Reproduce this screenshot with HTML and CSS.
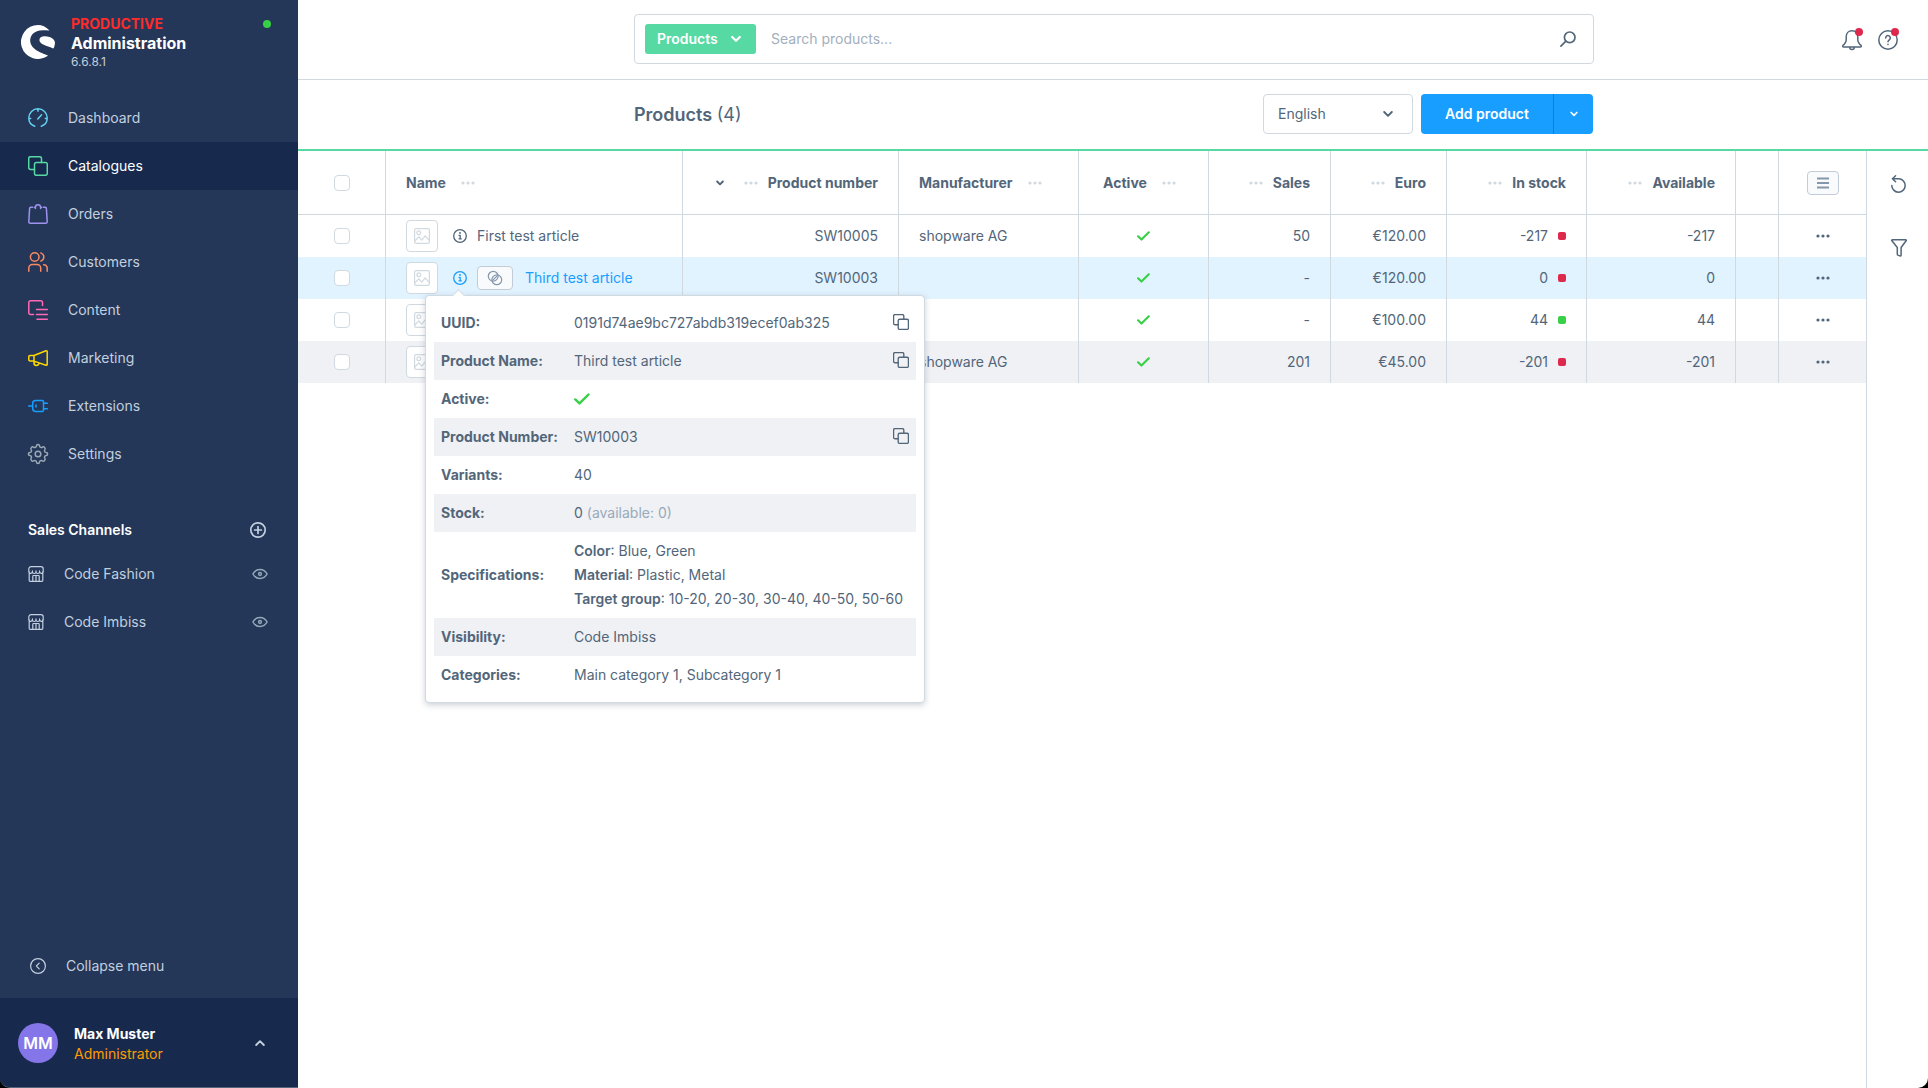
FILE: index.html
```html
<!DOCTYPE html>
<html lang="en">
<head>
<meta charset="utf-8">
<meta name="viewport" content="width=device-width, initial-scale=1">
<title>Products | Administration</title>
<link rel="stylesheet" href="styles.css">
</head>
<body>
<svg class="sprite" aria-hidden="true">
  <symbol id="i-copy" viewBox="0 0 20 20"><path d="M6.500 13.500H2.600A1.900 1.900 0 0 1 .7 11.600V2.600A1.900 1.900 0 0 1 2.600.7h9A1.900 1.900 0 0 1 13.500 2.600V6.500"/><rect x="6.500" y="6.500" width="12.800" height="12.800" rx="1.900"/></symbol>
  <symbol id="i-check" viewBox="0 0 16 12"><path d="M1.300 6.400l4.200 4L14.500 1.500"/></symbol>
  <symbol id="i-down" viewBox="0 0 10 8"><path d="M1.200 2l3.800 3.800L8.800 2"/></symbol>
  <symbol id="i-dots" viewBox="0 0 14 4"><circle cx="2" cy="2" r="1.600"/><circle cx="7" cy="2" r="1.600"/><circle cx="12" cy="2" r="1.600"/></symbol>
  <symbol id="i-info" viewBox="0 0 16 16"><circle cx="8" cy="8" r="7.200"/><path d="M7 7.300h1.200v3.900M6.900 11.200h2.600"/><circle cx="8" cy="4.700" r=".4"/></symbol>
  <symbol id="i-image" viewBox="0 0 16 16"><rect x=".6" y=".6" width="14.800" height="14.800" rx="1.600"/><circle cx="4.800" cy="4.700" r="1.900"/><path d="M.8 13l4-4.200 3 3.400 3.400-4.400 4 4.600"/></symbol>
  <symbol id="i-shop" viewBox="0 0 16 16"><path d="M1.200 5.500v8.700a1.200 1.200 0 0 0 1.200 1.200h11.200a1.200 1.200 0 0 0 1.200-1.200V5.500M3 .7h10a2.200 2.200 0 0 1 2.200 2.200v2.400a1.700 1.700 0 0 1-3.600.4V4.900v.8a1.800 1.800 0 0 1-3.600 0V4.900v.8a1.800 1.800 0 0 1-3.600 0V4.900v.8A1.700 1.700 0 0 1 .8 5.300V2.900A2.200 2.200 0 0 1 3 .7zM4.800 15.200V10.200a.7.7 0 0 1 .7-.7h5a.7.7 0 0 1 .7.7v5M8 9.500v5.800"/></symbol>
  <symbol id="i-eye" viewBox="0 0 16 12"><path d="M.9 6C2.600 3 5 1.500 8 1.500S13.400 3 15.100 6c-1.700 3-4.100 4.500-7.100 4.500S2.600 9 .9 6z"/><circle cx="8" cy="6" r="1.400"/></symbol>
</svg>

<div class="app">
  <aside class="sidebar">
    <header class="brand">
      <svg class="brand__logo" viewBox="0 0 34 34" aria-hidden="true"><path fill="#fff" d="M28 4.900C25 2 21 0 17 0A17 17 0 1 0 26.600 31C26.900 30.700 26.800 30.300 26.400 30.200C20 27.700 9.200 24.500 9.200 15.300C9.200 9.500 14.500 5.300 21.500 5.300C23.700 5.300 25.800 5.500 27.800 5.600C28.300 5.600 28.400 5.200 28 4.900z"/><path fill="#fff" d="M34 17.800C34 15.500 31.600 11.200 23.500 11.200C20.300 11.200 18.400 12.600 18.400 15C18.400 19.600 26 20.500 31.600 23.300C32.100 23.600 32.700 23.400 32.900 22.800C33.500 21.200 34 19.500 34 17.800z"/></svg>
      <div class="brand__text">
        <strong class="brand__env">PRODUCTIVE</strong>
        <strong class="brand__name">Administration</strong>
        <span class="brand__version">6.6.8.1</span>
      </div>
      <span class="brand__status"></span>
    </header>

    <nav class="menu" aria-label="Main menu">
      <a class="menu__item" href="#"><svg class="icon icon--dashboard" viewBox="0 0 20 20"><path d="M6.700 18.300C3.200 17 .8 13.800.8 10a9.200 9.200 0 0 1 18.400 0c0 3.800-2.400 7-5.900 8.300M10 1v2.200M1 10.600h1.700M17.300 10.600H19M9.800 11l3.800-4.200"/></svg>Dashboard</a>
      <a class="menu__item menu__item--active" href="#" aria-current="page"><svg class="icon icon--catalogue"><use href="#i-copy"/></svg>Catalogues</a>
      <a class="menu__item" href="#"><svg class="icon icon--orders" viewBox="0 0 20 20"><path d="M4.600 3.300H2.800A1.200 1.200 0 0 0 1.600 4.500L.8 17.800a1.400 1.400 0 0 0 1.400 1.500h15.600a1.400 1.400 0 0 0 1.400-1.500L18.400 4.500a1.200 1.200 0 0 0-1.200-1.200h-1.800M7.400 4.400V3.300A2.600 2.600 0 0 1 12.600 3.300V4.400M6.400 3.300h1M12.600 3.300h1"/></svg>Orders</a>
      <a class="menu__item" href="#"><svg class="icon icon--customers" viewBox="0 0 20 20"><circle cx="6.700" cy="5" r="4.300"/><path d="M.8 19.200v-3a3.600 3.600 0 0 1 3.600-3.600h4.700a3.600 3.600 0 0 1 3.600 3.600v3M12.800.9a4.300 4.300 0 0 1 0 8.200M15.600 12.700a3.700 3.700 0 0 1 3.600 3.600v2.900"/></svg>Customers</a>
      <a class="menu__item" href="#"><svg class="icon icon--content" viewBox="0 0 20 20"><path d="M5.500 14.500H2.500A1.700 1.700 0 0 1 .8 12.800V2.500A1.700 1.700 0 0 1 2.500.8h10.300a1.700 1.700 0 0 1 1.700 1.700v3M8.500 9.500h10.800M8.500 14.500h10.800M9 19.300h10.300"/></svg>Content</a>
      <a class="menu__item" href="#"><svg class="icon icon--marketing" viewBox="0 0 20 20"><path d="M6 7.500L18 2.800a.9.900 0 0 1 1.200.8v12.800a.9.900 0 0 1-1.200.8L6 13.100zM6 7.500H2a1.200 1.200 0 0 0-1.200 1.200v3A1.200 1.200 0 0 0 2 12.900h4M6 13v1.800a2.500 2.500 0 0 0 5 .4"/></svg>Marketing</a>
      <a class="menu__item" href="#"><svg class="icon icon--extensions" viewBox="0 0 20 20"><path d="M.7 10h4M7.500 4.600h6.800a1.200 1.200 0 0 1 1.200 1.200v8.400a1.200 1.200 0 0 1-1.200 1.200H7.500a2.800 2.800 0 0 1-2.800-2.800V7.400a2.800 2.800 0 0 1 2.800-2.800zM15.500 7.300h3.800M15.500 12.700h3.800M8 9v2"/></svg>Extensions</a>
      <a class="menu__item" href="#"><svg class="icon icon--settings" viewBox="0 0 20 20"><circle cx="10" cy="10" r="2.800"/><path d="M8.500 1.900A1.500 1.500 0 0 1 11.500 1.900C11.600 3.300 13.300 4 14.400 3.100C15.900 2.200 17.800 4.100 16.900 5.600C16 6.700 16.700 8.400 18.100 8.500A1.500 1.500 0 0 1 18.100 11.500C16.700 11.600 16 13.300 16.900 14.400C17.800 15.900 15.900 17.800 14.400 16.900C13.300 16 11.600 16.700 11.500 18.100A1.500 1.500 0 0 1 8.500 18.100C8.400 16.700 6.700 16 5.600 16.900C4.100 17.800 2.200 15.900 3.100 14.400C4 13.300 3.300 11.600 1.900 11.500A1.500 1.500 0 0 1 1.900 8.500C3.300 8.400 4 6.700 3.100 5.600C2.200 4.100 4.100 2.200 5.600 3.100C6.700 4 8.400 3.300 8.500 1.900z"/></svg>Settings</a>
    </nav>

    <section class="channels">
      <div class="channels__head">
        <h2 class="channels__title">Sales Channels</h2>
        <button class="plain" type="button" aria-label="Add sales channel"><svg class="icon icon--16 icon--bold" viewBox="0 0 16 16"><circle cx="8" cy="8" r="7.200"/><path d="M8 4.600v6.800M4.600 8h6.800"/></svg></button>
      </div>
      <div class="channel"><a class="channel__link" href="#"><svg class="icon icon--16"><use href="#i-shop"/></svg>Code Fashion</a><button class="plain" type="button" aria-label="Open Code Fashion"><svg class="icon icon--eye"><use href="#i-eye"/></svg></button></div>
      <div class="channel"><a class="channel__link" href="#"><svg class="icon icon--16"><use href="#i-shop"/></svg>Code Imbiss</a><button class="plain" type="button" aria-label="Open Code Imbiss"><svg class="icon icon--eye"><use href="#i-eye"/></svg></button></div>
    </section>

    <button class="collapse" type="button"><svg class="icon icon--16" viewBox="0 0 16 16"><circle cx="8" cy="8" r="7.400"/><path d="M9.200 5.200L6.400 8l2.800 2.800"/></svg>Collapse menu</button>

    <button class="user" type="button">
      <span class="user__avatar">MM</span>
      <span class="user__text"><strong class="user__name">Max Muster</strong><span class="user__role">Administrator</span></span>
      <svg class="icon chevron chevron--up"><use href="#i-down"/></svg>
    </button>
  </aside>

  <div class="page">
    <header class="topbar">
      <form class="search" role="search">
        <button class="search__type" type="button">Products<svg class="icon chevron chevron--bold"><use href="#i-down"/></svg></button>
        <input class="search__input" type="search" placeholder="Search products..." aria-label="Search products">
        <button class="plain" type="submit" aria-label="Search"><svg class="icon icon--16 icon--bold" viewBox="0 0 16 16"><circle cx="9.700" cy="6.300" r="5.300"/><path d="M5.900 10.100L.9 15.100"/></svg></button>
      </form>
      <div class="topbar__actions">
        <button class="plain notify" type="button" aria-label="Notifications"><svg class="icon" viewBox="0 0 20 20"><path d="M10 .8C6.500.8 4.200 3.400 4.200 6.800V10c0 1.500-.6 2.800-1.700 3.900L.9 15.600c-.5.600-.1 1.400.6 1.400h17c.7 0 1.100-.8.600-1.400l-1.600-1.700A5.600 5.600 0 0 1 15.800 10V6.800C15.800 3.400 13.500.8 10 .8zM7.700 17.300a2.300 2.300 0 0 0 4.600 0"/></svg></button>
        <button class="plain notify" type="button" aria-label="Help"><svg class="icon" viewBox="0 0 20 20"><circle cx="10" cy="10" r="9.200"/><path d="M7.700 8A2.300 2.300 0 1 1 11.300 9.800C10.400 10.400 10 10.800 10 11.800M10 14.200v.2"/></svg></button>
      </div>
    </header>

    <div class="smartbar">
      <div class="smartbar__inner">
        <h1 class="smartbar__title">Products <span class="smartbar__count">(4)</span></h1>
        <div class="smartbar__actions">
          <div class="select">
            <select class="select__field" aria-label="Language"><option>English</option></select>
            <svg class="icon chevron"><use href="#i-down"/></svg>
          </div>
          <div class="split">
            <button class="split__main" type="button">Add product</button>
            <button class="split__more" type="button" aria-label="More options"><svg class="icon chevron chevron--small"><use href="#i-down"/></svg></button>
          </div>
        </div>
      </div>
    </div>

    <div class="content">
      <main class="listing">
        <table class="grid">
          <colgroup><col class="w-check"><col class="w-name"><col class="w-number"><col class="w-maker"><col class="w-active"><col class="w-sales"><col class="w-euro"><col class="w-stock"><col class="w-avail"><col class="w-empty"><col class="w-actions"></colgroup>
          <thead>
            <tr>
              <th class="mid"><input class="check" type="checkbox" aria-label="Select all"></th>
              <th><div class="head">Name<svg class="dots"><use href="#i-dots"/></svg></div></th>
              <th><div class="head head--end"><svg class="icon chevron chevron--sort"><use href="#i-down"/></svg><svg class="dots"><use href="#i-dots"/></svg>Product number</div></th>
              <th><div class="head">Manufacturer<svg class="dots"><use href="#i-dots"/></svg></div></th>
              <th><div class="head head--mid">Active<svg class="dots"><use href="#i-dots"/></svg></div></th>
              <th><div class="head head--end"><svg class="dots"><use href="#i-dots"/></svg>Sales</div></th>
              <th><div class="head head--end"><svg class="dots"><use href="#i-dots"/></svg>Euro</div></th>
              <th><div class="head head--end"><svg class="dots"><use href="#i-dots"/></svg>In stock</div></th>
              <th><div class="head head--end"><svg class="dots"><use href="#i-dots"/></svg>Available</div></th>
              <th></th>
              <th class="mid"><button class="chip chip--menu" type="button" aria-label="List settings"><svg viewBox="0 0 12 12"><path d="M0 1.500h12M0 6h12M0 10.500h12"/></svg></button></th>
            </tr>
          </thead>
          <tbody>
            <tr>
              <td class="mid"><input class="check" type="checkbox" aria-label="Select First test article"></td>
              <td><div class="product"><span class="thumb"><svg class="icon"><use href="#i-image"/></svg></span><span class="product__info"><svg class="icon icon--info"><use href="#i-info"/></svg></span><a class="product__name" href="#">First test article</a></div></td>
              <td class="end">SW10005</td><td>shopware AG</td>
              <td class="mid"><svg class="tick"><use href="#i-check"/></svg></td>
              <td class="end">50</td><td class="end">€120.00</td>
              <td><div class="stock">-217<span class="flag flag--low"></span></div></td><td class="end">-217</td><td></td>
              <td class="mid"><button class="plain" type="button" aria-label="Actions"><svg class="dots dots--dark"><use href="#i-dots"/></svg></button></td>
            </tr>
            <tr class="is-hover">
              <td class="mid"><input class="check" type="checkbox" aria-label="Select Third test article"></td>
              <td><div class="product"><span class="thumb"><svg class="icon"><use href="#i-image"/></svg></span><span class="product__info"><svg class="icon icon--info"><use href="#i-info"/></svg>
                <div class="popover" role="tooltip">
                  <table class="facts">
                    <tr><th scope="row">UUID:</th><td>0191d74ae9bc727abdb319ecef0ab325</td><td class="facts__copy"><button class="plain" type="button" aria-label="Copy UUID"><svg class="icon icon--copy"><use href="#i-copy"/></svg></button></td></tr>
                    <tr><th scope="row">Product Name:</th><td>Third test article</td><td class="facts__copy"><button class="plain" type="button" aria-label="Copy product name"><svg class="icon icon--copy"><use href="#i-copy"/></svg></button></td></tr>
                    <tr><th scope="row">Active:</th><td colspan="2"><svg class="tick tick--large"><use href="#i-check"/></svg></td></tr>
                    <tr><th scope="row">Product Number:</th><td>SW10003</td><td class="facts__copy"><button class="plain" type="button" aria-label="Copy product number"><svg class="icon icon--copy"><use href="#i-copy"/></svg></button></td></tr>
                    <tr><th scope="row">Variants:</th><td colspan="2">40</td></tr>
                    <tr><th scope="row">Stock:</th><td colspan="2">0 <span class="muted">(available: 0)</span></td></tr>
                    <tr><th scope="row">Specifications:</th><td colspan="2"><b>Color</b>: Blue, Green<br><b>Material</b>: Plastic, Metal<br><b>Target group</b>: 10-20, 20-30, 30-40, 40-50, 50-60</td></tr>
                    <tr><th scope="row">Visibility:</th><td colspan="2">Code Imbiss</td></tr>
                    <tr><th scope="row">Categories:</th><td colspan="2">Main category 1, Subcategory 1</td></tr>
                  </table>
                </div></span><button class="chip" type="button" aria-label="Variants"><svg class="icon icon--variants" viewBox="0 0 16 16"><circle cx="6.200" cy="6.200" r="4.900"/><circle cx="9.800" cy="9.800" r="4.900"/><path d="M6.300 9.700l3.400-3.400"/></svg></button><a class="product__name product__name--variant" href="#">Third test article</a></div></td>
              <td class="end">SW10003</td><td></td>
              <td class="mid"><svg class="tick"><use href="#i-check"/></svg></td>
              <td class="end">-</td><td class="end">€120.00</td>
              <td><div class="stock">0<span class="flag flag--low"></span></div></td><td class="end">0</td><td></td>
              <td class="mid"><button class="plain" type="button" aria-label="Actions"><svg class="dots dots--dark"><use href="#i-dots"/></svg></button></td>
            </tr>
            <tr>
              <td class="mid"><input class="check" type="checkbox" aria-label="Select row 3"></td>
              <td><div class="product"><span class="thumb"><svg class="icon"><use href="#i-image"/></svg></span></div></td>
              <td></td><td></td>
              <td class="mid"><svg class="tick"><use href="#i-check"/></svg></td>
              <td class="end">-</td><td class="end">€100.00</td>
              <td><div class="stock">44<span class="flag"></span></div></td><td class="end">44</td><td></td>
              <td class="mid"><button class="plain" type="button" aria-label="Actions"><svg class="dots dots--dark"><use href="#i-dots"/></svg></button></td>
            </tr>
            <tr class="is-odd">
              <td class="mid"><input class="check" type="checkbox" aria-label="Select row 4"></td>
              <td><div class="product"><span class="thumb"><svg class="icon"><use href="#i-image"/></svg></span></div></td>
              <td></td><td>shopware AG</td>
              <td class="mid"><svg class="tick"><use href="#i-check"/></svg></td>
              <td class="end">201</td><td class="end">€45.00</td>
              <td><div class="stock">-201<span class="flag flag--low"></span></div></td><td class="end">-201</td><td></td>
              <td class="mid"><button class="plain" type="button" aria-label="Actions"><svg class="dots dots--dark"><use href="#i-dots"/></svg></button></td>
            </tr>
          </tbody>
        </table>
      </main>
      <aside class="tools" aria-label="List tools">
        <button class="tools__item" type="button" aria-label="Refresh"><svg class="icon icon--tool" viewBox="0 0 16 18"><path d="M1.400 3.800h6.800a6.700 6.700 0 1 1-7.400 6.700M4.600.8l-3.200 3 3.200 3"/></svg></button>
        <button class="tools__item" type="button" aria-label="Filter"><svg class="icon icon--tool" viewBox="0 0 16 18"><path d="M1.400.8h13.200a.6.600 0 0 1 .5 1L10.100 8.500v7.600a.9.900 0 0 1-1.200.8l-2-.8a1 1 0 0 1-.6-.9V8.500L.9 1.800a.6.600 0 0 1 .5-1z"/></svg></button>
      </aside>
    </div>
  </div>
</div>
</body>
</html>
```
FILE: styles.css
```css
:root {
  --navy: #243758;
  --navy-dark: #172a4e;
  --text: #52667a;
  --line: #d1d9e0;
  --blue: #189eff;
  --green: #57d9a3;
  --success: #37d046;
  --danger: #de294c;
  --pale: #c2cfdf;
}

* { box-sizing: border-box; }

body {
  margin: 0;
  background: #000;
  color: var(--text);
  font: 14px/20px Inter, "Liberation Sans", sans-serif;
}

button, input, select { font: inherit; color: inherit; }
button { cursor: pointer; }
a { color: inherit; text-decoration: none; }
h1, h2 { margin: 0; }
svg { display: block; flex: none; }

.sprite { display: none; }

.plain {
  display: flex;
  padding: 0;
  border: 0;
  background: none;
}

/* Icons */
.icon {
  width: 20px;
  height: 20px;
  fill: none;
  stroke: currentColor;
  stroke-width: 1.5;
  stroke-linecap: round;
  stroke-linejoin: round;
  overflow: visible;
}
.icon--16 { width: 16px; height: 16px; stroke-width: 1.2; }
.icon--bold { stroke-width: 1.7; }
.icon--eye { width: 16px; height: 12px; stroke: #96a9ba; }
.icon--copy { width: 16px; height: 16px; stroke-width: 1.7; }
.icon--info { width: 14px; height: 14px; }
.icon--variants { width: 16px; height: 16px; stroke: #8497ab; stroke-width: 1.2; }
.icon--tool { width: 16px; height: 18px; }
.icon--dashboard { color: #64d0ee; }
.icon--catalogue { color: #57d9a3; }
.icon--orders { color: #a092f0; }
.icon--customers { color: #f88962; }
.icon--content { color: #ff68b4; }
.icon--marketing { color: #ffd700; }
.icon--extensions { color: #189eff; }
.icon--settings { color: #9aa8b5; }

.chevron { width: 10px; height: 8px; stroke-width: 1.9; }
.chevron--bold { stroke-width: 2.2; }
.chevron--small { width: 8px; height: 6px; stroke-width: 2.2; }
.chevron--sort { width: 8px; height: 6px; stroke-width: 2.6; }
.chevron--up { transform: scaleY(-1); }

.dots { width: 14px; height: 4px; fill: var(--line); }
.dots--dark { fill: var(--text); }

.tick {
  width: 13px;
  height: 10px;
  margin: 0 auto;
  fill: none;
  stroke: var(--success);
  stroke-width: 2.6;
  stroke-linecap: round;
  stroke-linejoin: round;
}
.tick--large { width: 16px; height: 12px; margin: 0; stroke-width: 2.4; }

/* Shell */
.app {
  display: grid;
  grid-template-columns: 298px minmax(0, 1fr);
  min-height: 100vh;
}

.sidebar {
  display: flex;
  flex-direction: column;
  overflow: hidden;
  border-bottom: 1px solid #56657e;
  border-bottom-left-radius: 10px;
  background: var(--navy);
  color: var(--pale);
}

.brand {
  display: flex;
  align-items: flex-start;
  padding: 16px 27px 24px 21px;
}
.brand__logo { width: 34px; height: 34px; margin-top: 9px; }
.brand__text {
  display: flex;
  flex: 1;
  flex-direction: column;
  margin-left: 16px;
}
.brand__env { color: #ff2b2b; font-weight: 700; line-height: 16px; }
.brand__name { color: #fff; font-size: 16px; font-weight: 700; line-height: 22px; }
.brand__version { font-size: 12px; line-height: 16px; }
.brand__status {
  width: 8px;
  height: 8px;
  margin-top: 4px;
  border-radius: 50%;
  background: var(--success);
}

.menu__item {
  display: flex;
  align-items: center;
  gap: 20px;
  height: 48px;
  padding: 0 28px;
}
.menu__item--active { background: var(--navy-dark); color: #fff; }

.channels { padding-top: 32px; }
.channels__head {
  display: flex;
  align-items: center;
  justify-content: space-between;
  height: 40px;
  padding: 0 32px 0 28px;
}
.channels__title {
  color: #fff;
  font-size: 14px;
  font-weight: 600;
}
.channel {
  display: flex;
  align-items: center;
  justify-content: space-between;
  height: 48px;
  padding: 0 30px 0 28px;
}
.channel__link { display: flex; align-items: center; gap: 20px; }

.collapse {
  display: flex;
  align-items: center;
  gap: 20px;
  height: 48px;
  margin: auto 0 8px;
  padding: 0 30px;
  border: 0;
  background: none;
}

.user {
  display: flex;
  align-items: center;
  gap: 16px;
  height: 89px;
  padding: 0 33px 0 18px;
  border: 0;
  background: var(--navy-dark);
  text-align: left;
}
.user__avatar {
  width: 40px;
  height: 40px;
  border-radius: 50%;
  background: #8475e8;
  color: #fff;
  font-size: 16px;
  font-weight: 600;
  line-height: 40px;
  text-align: center;
}
.user__text { display: flex; flex: 1; flex-direction: column; padding-top: 2px; }
.user__name { color: #fff; font-weight: 700; }
.user__role { color: #ff9a00; }

.page {
  display: flex;
  flex-direction: column;
  min-width: 0;
  border-bottom-right-radius: 10px;
  background: #fff;
}

/* Top bar */
.topbar {
  display: grid;
  grid-template-columns: 1fr minmax(0, 960px) 1fr;
  align-items: center;
  height: 80px;
  padding: 0 0 15px 2px;
  border-bottom: 1px solid var(--line);
}
.search {
  display: flex;
  grid-column: 2;
  align-items: center;
  align-self: end;
  height: 50px;
  padding: 0 17px 0 10px;
  border: 1px solid var(--line);
  border-radius: 4px;
}
.search__type {
  display: flex;
  align-items: center;
  justify-content: space-between;
  width: 111px;
  height: 30px;
  padding: 0 15px 0 12px;
  border: 0;
  border-radius: 3px;
  background: var(--green);
  color: #fff;
  font-weight: 600;
}
.search__input {
  flex: 1;
  min-width: 0;
  padding: 0 15px;
  border: 0;
  outline: 0;
  background: none;
  appearance: none;
}
.search__input::placeholder { color: #a3afbd; opacity: 1; }
.topbar__actions {
  display: flex;
  justify-content: flex-end;
  gap: 16px;
  padding: 15px 30px 0 0;
}
.notify { position: relative; }
.notify::after {
  content: "";
  position: absolute;
  top: -2px;
  right: -1px;
  width: 8px;
  height: 8px;
  border-radius: 50%;
  background: var(--danger);
}

/* Page header */
.smartbar {
  display: flex;
  justify-content: center;
  height: 71px;
  padding-left: 2px;
  border-bottom: 2px solid var(--green);
}
.smartbar__inner {
  display: flex;
  flex: 0 1 960px;
  align-items: center;
  justify-content: space-between;
}
.smartbar__title { font-size: 18px; font-weight: 600; line-height: 24px; }
.smartbar__count { font-weight: 400; }
.smartbar__actions { display: flex; gap: 8px; padding: 0 1px 1px 0; }
.select {
  display: grid;
  grid-template-columns: 1fr auto;
  align-items: center;
  width: 150px;
}
.select__field {
  grid-area: 1 / 1 / 2 / 3;
  width: 100%;
  height: 40px;
  padding: 0 14px;
  border: 1px solid var(--line);
  border-radius: 4px;
  background: #fff;
  appearance: none;
}
.select .chevron { grid-area: 1 / 2; margin-right: 20px; pointer-events: none; }
.split { display: flex; }
.split__main, .split__more {
  height: 40px;
  border: 0;
  background: var(--blue);
  color: #fff;
  font-weight: 600;
}
.split__main { width: 132px; border-radius: 4px 0 0 4px; }
.split__more {
  display: flex;
  align-items: center;
  justify-content: center;
  width: 40px;
  padding: 0;
  border-left: 1px solid #0e7fd4;
  border-radius: 0 4px 4px 0;
}

/* Listing */
.content { display: flex; flex: 1; }
.listing { flex: 1; min-width: 0; }
.tools {
  display: flex;
  flex-direction: column;
  width: 62px;
  padding: 1px 0 0 2px;
  border-left: 1px solid var(--line);
}
.tools__item {
  display: flex;
  align-items: center;
  justify-content: center;
  height: 64px;
  padding: 0;
  border: 0;
  background: none;
}

.grid {
  width: 100%;
  table-layout: fixed;
  border-spacing: 0;
}
.w-check { width: 88px; }
.w-number { width: 216px; }
.w-maker { width: 180px; }
.w-active { width: 130px; }
.w-sales { width: 122px; }
.w-euro { width: 116px; }
.w-stock { width: 140px; }
.w-avail { width: 149px; }
.w-empty { width: 43px; }
.w-actions { width: 87px; }

.grid > thead th,
.grid > tbody > tr > td {
  padding: 0 20px;
  border-right: 1px solid var(--line);
  text-align: left;
}
.grid > thead th:last-child,
.grid > tbody > tr > td:last-child { border-right: 0; }
.grid > thead th {
  height: 64px;
  border-bottom: 1px solid var(--line);
  font-weight: 700;
}
.grid > tbody > tr > td { height: 42px; }
.grid .end { text-align: right; }
.grid .is-hover > td { background: #e1f3ff; }
.grid .is-odd > td { background: #f0f1f5; }
.mid .check, .mid .plain, .mid .chip { margin: 0 auto; }

.head { display: flex; align-items: center; gap: 15px; white-space: nowrap; }
.head--end { justify-content: flex-end; gap: 10px; }
.head--mid { justify-content: center; padding-right: 8px; }
.chevron--sort { margin-right: 10px; }

.check {
  display: block;
  width: 16px;
  height: 16px;
  border: 1px solid var(--line);
  border-radius: 4px;
  background: #fff;
  appearance: none;
}

.product { display: flex; align-items: center; }
.thumb {
  display: grid;
  place-items: center;
  width: 32px;
  height: 32px;
  border: 1px solid var(--line);
  border-radius: 4px;
  background: #fff;
}
.thumb .icon { width: 16px; height: 16px; stroke: var(--line); stroke-width: 1.2; }
.product__info { position: relative; margin: 0 10px 0 15px; }
.product__name--variant { margin-left: 12px; }
.is-hover .product__name,
.is-hover .icon--info { color: var(--blue); }

.chip {
  display: flex;
  align-items: center;
  justify-content: center;
  width: 36px;
  height: 24px;
  padding: 0;
  border: 1px solid #c2ccd8;
  border-radius: 4px;
  background: #f9fafb;
}
.chip--menu { width: 32px; }
.chip--menu svg { width: 12px; height: 12px; stroke: #8497ab; stroke-width: 2; }

.stock { display: flex; align-items: center; justify-content: flex-end; gap: 10px; }
.flag { width: 8px; height: 8px; border-radius: 2px; background: var(--success); }
.flag--low { background: var(--danger); }

/* Product preview */
.popover {
  position: absolute;
  z-index: 2;
  top: 24px;
  left: -28px;
  width: 500px;
  padding: 8px;
  border: 1px solid var(--line);
  border-radius: 4px;
  background: #fff;
  box-shadow: 0 2px 6px rgba(82, 102, 122, 0.3);
  cursor: default;
}
.popover::before {
  content: "";
  position: absolute;
  top: -5px;
  left: 28px;
  width: 8px;
  height: 8px;
  border: solid var(--line);
  border-width: 1px 0 0 1px;
  background: #fff;
  transform: rotate(45deg);
}
.facts {
  width: 100%;
  border-spacing: 0;
  line-height: 24px;
  text-align: left;
}
.facts th { width: 132px; padding: 7px 0 7px 7px; font-weight: 700; }
.facts td { padding: 7px 0 7px 8px; white-space: nowrap; }
.facts .facts__copy { width: 31px; padding: 0 7px 2px 8px; }
.facts tr:nth-child(even) { background: #f0f1f5; }
.facts b { font-weight: 600; }
.muted { color: #98a9ba; }
```
